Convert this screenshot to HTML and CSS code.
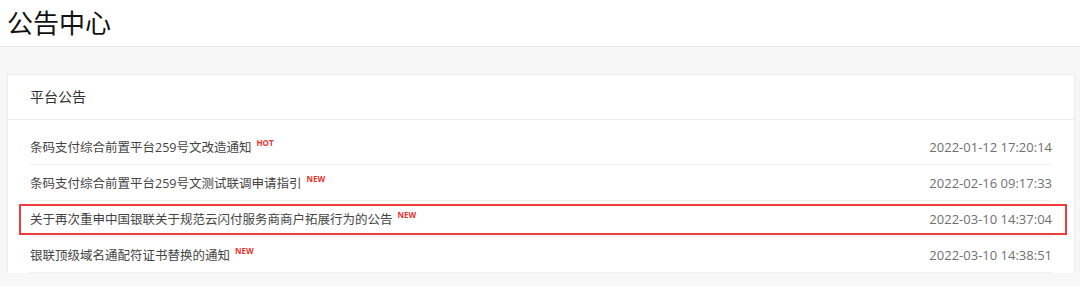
FILE: index.html
```html
<!DOCTYPE html>
<html lang="zh-CN">
  <head>
    <meta charset="UTF-8" />
    <meta name="viewport" content="width=device-width, initial-scale=1.0" />
    <title>公告中心</title>
    <link rel="stylesheet" href="styles.css">
  </head>
  <body>
    <div class="page-header">
      <h1>公告中心</h1>
    </div>

    <div class="main">
      <div class="card">
        <div class="card-title">平台公告</div>
        <ul class="notice-list">
          <li class="notice">
            <span class="notice-name">条码支付综合前置平台259号文改造通知<sup class="tag">HOT</sup></span>
            <span class="notice-date">2022-01-12 17:20:14</span>
          </li>
          <li class="notice">
            <span class="notice-name">条码支付综合前置平台259号文测试联调申请指引<sup class="tag">NEW</sup></span>
            <span class="notice-date">2022-02-16 09:17:33</span>
          </li>
          <li class="notice marked">
            <span class="notice-name">关于再次重申中国银联关于规范云闪付服务商商户拓展行为的公告<sup class="tag">NEW</sup></span>
            <span class="notice-date">2022-03-10 14:37:04</span>
          </li>
          <li class="notice">
            <span class="notice-name">银联顶级域名通配符证书替换的通知<sup class="tag">NEW</sup></span>
            <span class="notice-date">2022-03-10 14:38:51</span>
          </li>
        </ul>
      </div>
    </div>
  </body>
</html>
```

FILE: styles.css
```css
body {
  font-family: 'Open Sans', 'Noto Sans CJK SC', sans-serif;
  margin: 0;
  padding: 0;
  background: #f7f7f7;
  color: #333;
}
.page-header {
  background: #fff;
  height: 46px;
  border-bottom: 1px solid #e6e6e6;
  padding-left: 7px;
}
.page-header h1 {
  margin: 0;
  font-size: 26px;
  font-weight: normal;
  line-height: 46px;
  color: #111;
}
.main {
  padding: 27px 5px 0 7px;
}
.card {
  background: #fff;
  border: 1px solid #ececec;
  border-bottom: none;
}
.card-title {
  height: 44px;
  line-height: 44px;
  padding-left: 22px;
  font-size: 14px;
  color: #333;
  border-bottom: 1px solid #ebebeb;
}
.notice-list {
  list-style: none;
  margin: 0;
  padding: 9px 22px 0 22px;
}
.notice {
  display: flex;
  justify-content: space-between;
  align-items: center;
  height: 35px;
  border-bottom: 1px solid #efefef;
  font-size: 12.5px;
  position: relative;
}
.notice-name {
  color: #444;
}
.notice-date {
  color: #707070;
  font-size: 13px;
}
.tag {
  color: #e8332f;
  font-size: 8px;
  font-weight: bold;
  margin-left: 5px;
  vertical-align: 6px;
  line-height: 1;
}
.marked::after {
  content: '';
  position: absolute;
  top: 3px;
  bottom: 1px;
  left: -11px;
  right: -15px;
  border: 2px solid #f03c3c;
}
```
